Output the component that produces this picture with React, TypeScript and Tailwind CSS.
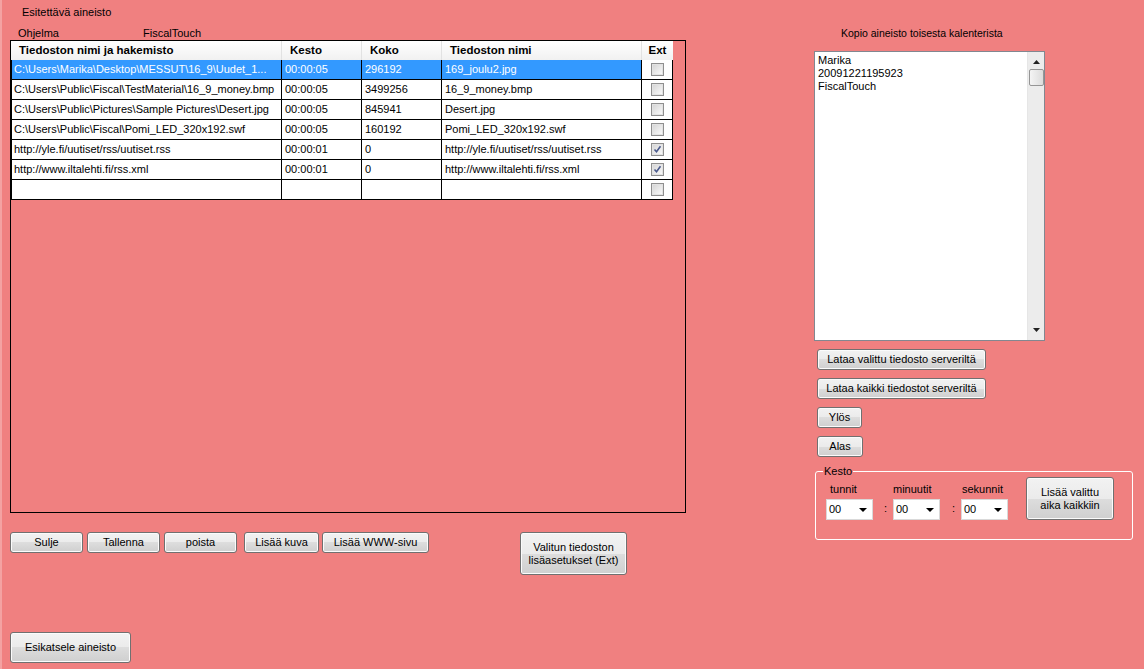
import React from "react";

const BTN =
  "flex items-center justify-center rounded-[3px] border border-[#707070] bg-[linear-gradient(#f2f2f2_0%,#ebebeb_50%,#dddddd_50%,#cfcfcf_100%)] shadow-[inset_0_0_0_1px_#fbfbfb] text-center leading-[13px] text-black";

function Btn({ className, children }: { className: string; children: React.ReactNode }) {
  return <div className={BTN + " " + className}>{children}</div>;
}

function Check({ checked }: { checked?: boolean }) {
  return (
    <div className="w-[13px] h-[13px] border border-[#8f8f8f] bg-[#f4f4f4] flex items-center justify-center">
      <div className="w-[11px] h-[11px] border border-[#e2e2e2] bg-[linear-gradient(135deg,#d6d6d6,#f9f9f9)] flex items-center justify-center">
        {checked && (
          <svg width="9" height="9" viewBox="0 0 9 9">
            <path d="M1.5 4.5 L3.5 6.8 L7.5 1.2" fill="none" stroke="#4a5a8c" strokeWidth="1.6" />
          </svg>
        )}
      </div>
    </div>
  );
}

const rows = [
  ["C:\\Users\\Marika\\Desktop\\MESSUT\\16_9\\Uudet_1...", "00:00:05", "296192", "169_joulu2.jpg", false],
  ["C:\\Users\\Public\\Fiscal\\TestMaterial\\16_9_money.bmp", "00:00:05", "3499256", "16_9_money.bmp", false],
  ["C:\\Users\\Public\\Pictures\\Sample Pictures\\Desert.jpg", "00:00:05", "845941", "Desert.jpg", false],
  ["C:\\Users\\Public\\Fiscal\\Pomi_LED_320x192.swf", "00:00:05", "160192", "Pomi_LED_320x192.swf", false],
  ["http://yle.fi/uutiset/rss/uutiset.rss", "00:00:01", "0", "http://yle.fi/uutiset/rss/uutiset.rss", true],
  ["http://www.iltalehti.fi/rss.xml", "00:00:01", "0", "http://www.iltalehti.fi/rss.xml", true],
  ["", "", "", "", false],
] as const;

function Combo() {
  return (
    <div className="w-[47px] h-[21px] border border-[#d9d9d9] bg-white flex items-center justify-between pl-[2px] pr-[5px]">
      <span className="leading-[13px] text-[11px]">00</span>
      <svg width="8" height="4" viewBox="0 0 8 4">
        <path d="M0 0 H8 L4 4 Z" fill="#000" />
      </svg>
    </div>
  );
}

export default function App() {
  return (
    <div
      className="w-[1144px] h-[669px] bg-[#f08080] flex text-[11px] text-black overflow-hidden border-l-2 border-[#f4a2a2]"
      style={{ fontFamily: '"Liberation Sans", Arial, sans-serif' }}
    >
      {/* Left column */}
      <div className="w-[684px] flex flex-col ml-[8px]">
        <div className="mt-[6px] h-[13px] leading-[13px] ml-[12px]">Esitettävä aineisto</div>
        <div className="mt-[8px] h-[13px] leading-[13px] flex">
          <span className="ml-[8px] w-[125px]">Ohjelma</span>
          <span>FiscalTouch</span>
        </div>
        <div className="mt-[0px] w-[676px] h-[473px] border border-black">
          {/* header */}
          <div className="flex h-[19px] w-[662px] bg-[linear-gradient(#ffffff,#f1f1f1)] font-bold text-[11.5px] leading-[19px]">
            <div className="w-[271px] pl-[8px] border-r border-[#e2e2e2]">Tiedoston nimi ja hakemisto</div>
            <div className="w-[80px] pl-[8px] border-r border-[#e2e2e2]">Kesto</div>
            <div className="w-[80px] pl-[8px] border-r border-[#e2e2e2]">Koko</div>
            <div className="w-[200px] pl-[8px] border-r border-[#e2e2e2]">Tiedoston nimi</div>
            <div className="w-[31px] text-center">Ext</div>
          </div>
          {rows.map((r, i) => {
            const sel = i === 0;
            const cell = sel ? "bg-[#3399ff] text-white" : "bg-white";
            return (
              <div key={i} className="flex h-[20px] w-[662px] leading-[19px]">
                <div className={"w-[271px] pl-[2px] border-l border-r border-b border-black whitespace-nowrap overflow-hidden " + cell}>{r[0]}</div>
                <div className={"w-[80px] pl-[3px] border-r border-b border-black " + cell}>{r[1]}</div>
                <div className={"w-[80px] pl-[3px] border-r border-b border-black " + cell}>{r[2]}</div>
                <div className={"w-[200px] pl-[3px] border-r border-b border-black whitespace-nowrap overflow-hidden " + cell}>{r[3]}</div>
                <div className="w-[31px] border-r border-b border-black bg-white flex items-center justify-center">
                  <Check checked={r[4] as boolean} />
                </div>
              </div>
            );
          })}
        </div>
        <div className="mt-[19px] flex relative">
          <Btn className="w-[73px] h-[21px]">Sulje</Btn>
          <Btn className="w-[73px] h-[21px] ml-[4px]">Tallenna</Btn>
          <Btn className="w-[73px] h-[21px] ml-[4px]">poista</Btn>
          <Btn className="w-[75px] h-[21px] ml-[7px]">Lisää kuva</Btn>
          <Btn className="w-[107px] h-[21px] ml-[3px]">Lisää WWW-sivu</Btn>
          <Btn className="w-[107px] h-[43px] ml-[91px]">
            Valitun tiedoston
            <br />
            lisäasetukset (Ext)
          </Btn>
        </div>
        <Btn className="mt-[57px] w-[121px] h-[31px]">Esikatsele aineisto</Btn>
      </div>

      {/* Right column */}
      <div className="ml-[120px] w-[320px] flex flex-col">
        <div className="mt-[27px] h-[13px] leading-[13px] ml-[27px] text-[10.5px]">Kopio aineisto toisesta kalenterista</div>
        <div className="mt-[11px] w-[231px] h-[290px] border border-[#828790] bg-white flex">
          <div className="flex-1 pl-[3px] pt-[2px] leading-[13px] text-[11px]">
            <div>Marika</div>
            <div>20091221195923</div>
            <div>FiscalTouch</div>
          </div>
          <div className="w-[17px] h-full bg-[#ececec] border-l border-[#e6e6e6] flex flex-col items-center">
            <svg className="mt-[8px]" width="7" height="4" viewBox="0 0 7 4">
              <path d="M0 4 H7 L3.5 0 Z" fill="#222" />
            </svg>
            <div className="mt-[5px] w-[15px] h-[17px] rounded-[2px] border border-[#959595] bg-[linear-gradient(90deg,#f4f4f4,#dcdcdc)]" />
            <div className="flex-1" />
            <svg className="mb-[8px]" width="7" height="4" viewBox="0 0 7 4">
              <path d="M0 0 H7 L3.5 4 Z" fill="#222" />
            </svg>
          </div>
        </div>
        <Btn className="mt-[8px] ml-[3px] w-[169px] h-[21px]">Lataa valittu tiedosto serveriltä</Btn>
        <Btn className="mt-[8px] ml-[3px] w-[169px] h-[21px]">Lataa kaikki tiedostot serveriltä</Btn>
        <Btn className="mt-[8px] ml-[3px] w-[45px] h-[21px]">Ylös</Btn>
        <Btn className="mt-[8px] ml-[3px] w-[46px] h-[21px]">Alas</Btn>
        <fieldset className="mt-[8px] ml-[1px] w-[318px] h-[75px] border border-white rounded-[3px] pl-[10px] pr-[8px] pt-0">
          <legend className="px-[1px] leading-[13px] ml-[-3px]">Kesto</legend>
          <div className="flex items-start">
            <div className="flex flex-col">
              <div className="flex">
                <div className="flex flex-col">
                  <span className="ml-[4px] leading-[13px] mt-[5px]">tunnit</span>
                  <div className="mt-[3px]"><Combo /></div>
                </div>
                <span className="ml-[11px] mt-[24px] w-[9px] leading-[13px]">:</span>
                <div className="flex flex-col">
                  <span className="leading-[13px] mt-[5px]">minuutit</span>
                  <div className="mt-[3px]"><Combo /></div>
                </div>
                <span className="ml-[12px] mt-[24px] w-[9px] leading-[13px]">:</span>
                <div className="flex flex-col">
                  <span className="ml-[1px] leading-[13px] mt-[5px]">sekunnit</span>
                  <div className="mt-[3px]"><Combo /></div>
                </div>
              </div>
            </div>
            <Btn className="ml-[18px] mt-[-1px] w-[88px] h-[43px]">
              Lisää valittu
              <br />
              aika kaikkiin
            </Btn>
          </div>
        </fieldset>
      </div>
    </div>
  );
}
